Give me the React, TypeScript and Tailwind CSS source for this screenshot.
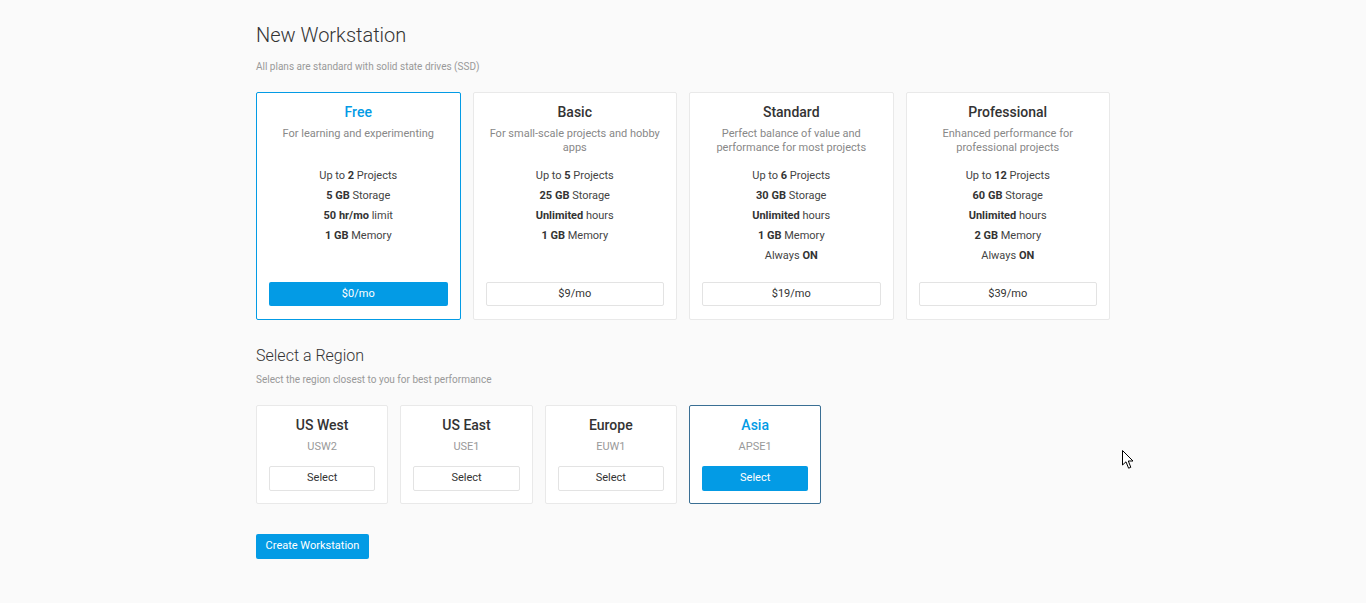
const plans = [
  {
    name: 'Free',
    desc: 'For learning and experimenting',
    features: [
      ['Up to ', '2', ' Projects'],
      ['', '5 GB', ' Storage'],
      ['', '50 hr/mo', ' limit'],
      ['', '1 GB', ' Memory'],
    ],
    price: '$0/mo',
    selected: true,
  },
  {
    name: 'Basic',
    desc: 'For small-scale projects and hobby apps',
    features: [
      ['Up to ', '5', ' Projects'],
      ['', '25 GB', ' Storage'],
      ['', 'Unlimited', ' hours'],
      ['', '1 GB', ' Memory'],
    ],
    price: '$9/mo',
    selected: false,
  },
  {
    name: 'Standard',
    desc: 'Perfect balance of value and performance for most projects',
    features: [
      ['Up to ', '6', ' Projects'],
      ['', '30 GB', ' Storage'],
      ['', 'Unlimited', ' hours'],
      ['', '1 GB', ' Memory'],
      ['Always ', 'ON', ''],
    ],
    price: '$19/mo',
    selected: false,
  },
  {
    name: 'Professional',
    desc: 'Enhanced performance for professional projects',
    features: [
      ['Up to ', '12', ' Projects'],
      ['', '60 GB', ' Storage'],
      ['', 'Unlimited', ' hours'],
      ['', '2 GB', ' Memory'],
      ['Always ', 'ON', ''],
    ],
    price: '$39/mo',
    selected: false,
  },
];

const regions = [
  { name: 'US West', code: 'USW2', selected: false },
  { name: 'US East', code: 'USE1', selected: false },
  { name: 'Europe', code: 'EUW1', selected: false },
  { name: 'Asia', code: 'APSE1', selected: true },
];

export default function App() {
  return (
    <div className="relative min-h-[603px] bg-[#fafafa] font-['Roboto',sans-serif]">
      <div className="w-[854px] mx-auto pt-[21px]">
        <h1 className="text-[20px] leading-[28px] font-light text-[#333] mb-[11px]">New Workstation</h1>
        <p className="text-[10px] leading-[14px] text-[#999] mb-[18px]">All plans are standard with solid state drives (SSD)</p>

        <div className="grid grid-cols-4 gap-3">
          {plans.map((plan) => (
            <div
              key={plan.name}
              className={`h-[228px] flex flex-col items-center bg-white rounded-[2px] border px-3 pt-[9px] pb-[13px] text-center ${
                plan.selected ? 'border-[#039be5]' : 'border-[#e9e9e9]'
              }`}
            >
              <h3 className={`text-[14px] leading-[20px] font-medium mb-[5px] ${plan.selected ? 'text-[#039be5]' : 'text-[#333]'}`}>
                {plan.name}
              </h3>
              <p className="h-[28px] mb-[11px] text-[11px] leading-[14px] text-[#888] px-1">{plan.desc}</p>
              <ul className="text-[11px] leading-[20px] text-[#444]">
                {plan.features.map((f, i) => (
                  <li key={i}>
                    {f[0]}
                    <span className="font-bold text-[#333]">{f[1]}</span>
                    {f[2]}
                  </li>
                ))}
              </ul>
              <button
                className={`mt-auto w-full h-[24px] text-[11px] rounded-[2px] ${
                  plan.selected ? 'bg-[#039be5] text-white' : 'bg-white border border-[#e3e3e3] text-[#333]'
                }`}
              >
                {plan.price}
              </button>
            </div>
          ))}
        </div>

        <h2 className="mt-[24px] text-[16px] leading-[24px] font-light text-[#333] mb-[5px]">Select a Region</h2>
        <p className="text-[10px] leading-[14px] text-[#999] mb-[18px]">Select the region closest to you for best performance</p>

        <div className="grid grid-cols-6 gap-3">
          {regions.map((r) => (
            <div
              key={r.name}
              className={`h-[99px] flex flex-col items-center bg-white rounded-[2px] border px-3 pt-[9px] text-center ${
                r.selected ? 'border-[#3a6f94]' : 'border-[#e9e9e9]'
              }`}
            >
              <h3 className={`text-[14px] leading-[20px] font-medium mb-[4px] ${r.selected ? 'text-[#039be5]' : 'text-[#333]'}`}>
                {r.name}
              </h3>
              <p className="text-[11px] leading-[16px] text-[#999] mb-[11px]">{r.code}</p>
              <button
                className={`w-full h-[25px] text-[11px] rounded-[2px] ${
                  r.selected ? 'bg-[#039be5] text-white' : 'bg-white border border-[#e3e3e3] text-[#333]'
                }`}
              >
                Select
              </button>
            </div>
          ))}
        </div>

        <button className="mt-[30px] h-[25px] w-[113px] bg-[#039be5] text-white text-[11px] rounded-[2px]">
          Create Workstation
        </button>
      </div>

      <svg className="absolute left-[1122px] top-[450px]" width="13" height="20" viewBox="0 0 13 20">
        <path d="M0.5 0.5 L0.5 15 L4 11.8 L6.6 18.2 L8.8 17.3 L6.3 11 L11 11 Z" fill="#fff" stroke="#000" strokeWidth="1" strokeLinejoin="round" />
      </svg>
    </div>
  );
}
